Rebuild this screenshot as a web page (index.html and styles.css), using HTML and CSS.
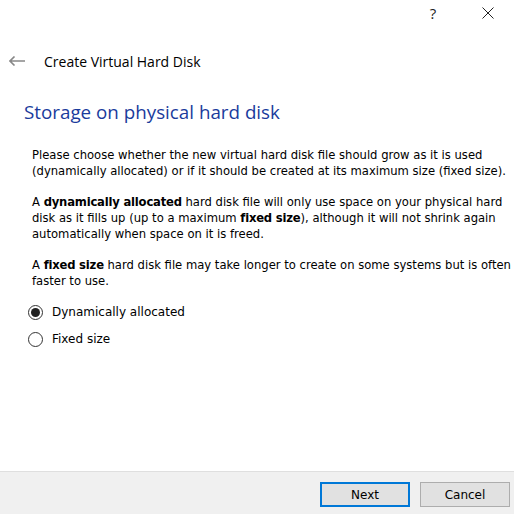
FILE: index.html
```html
<!DOCTYPE html>
<html>
<head>
<meta charset="utf-8">
<link rel="stylesheet" href="styles.css">
</head>
<body>
<div class="dialog">
  <div class="titlebar">
    <span class="tb-help">?</span>
    <span class="tb-close">
      <svg width="12" height="12" viewBox="0 0 12 12"><path d="M0.5 0.5 L11.5 11.5 M11.5 0.5 L0.5 11.5" stroke="#222" stroke-width="1" fill="none"/></svg>
    </span>
  </div>
  <div class="header">
    <svg class="back" width="17" height="10" viewBox="0 0 17 10"><path d="M1 5 H16 M5.5 0.5 L1 5 L5.5 9.5" stroke="#888" stroke-width="1.6" fill="none"/></svg>
    <span class="header-title">Create Virtual Hard Disk</span>
  </div>
  <div class="content">
    <h1 class="heading">Storage on physical hard disk</h1>
    <p class="para">Please choose whether the new virtual hard disk file should grow as it is used<br>(dynamically allocated) or if it should be created at its maximum size (fixed size).</p>
    <p class="para">A <b>dynamically allocated</b> hard disk file will only use space on your physical hard<br>disk as it fills up (up to a maximum <b>fixed size</b>), although it will not shrink again<br>automatically when space on it is freed.</p>
    <p class="para">A <b>fixed size</b> hard disk file may take longer to create on some systems but is often<br>faster to use.</p>
    <div class="radios">
      <label class="radio"><span class="dot checked"></span>Dynamically allocated</label>
      <label class="radio"><span class="dot"></span>Fixed size</label>
    </div>
  </div>
  <div class="footer">
    <button class="btn primary">Next</button>
    <button class="btn">Cancel</button>
  </div>
</div>
</body>
</html>
```
FILE: styles.css
```css
html, body { margin: 0; padding: 0; background: #fff; }
* { box-sizing: border-box; }
.dialog {
  width: 514px; height: 514px;
  display: flex; flex-direction: column;
  font-family: "DejaVu Sans", Verdana, sans-serif;
  color: #000;
}
.titlebar {
  height: 26px;
  display: flex; justify-content: flex-end; align-items: center;
  font-family: "Open Sans", sans-serif;
}
.tb-help { font-size: 15px; color: #222; width: 20px; text-align: center; margin-right: 39px; }
.tb-close { width: 14px; display: flex; align-items: center; margin-right: 18px; }
.header {
  height: 34px; margin-top: 18px;
  display: flex; align-items: center;
}
.back { margin-left: 9px; margin-right: 18px; }
.header-title { font-family: "Open Sans", sans-serif; font-size: 14px; color: #000; }
.content { flex: 1; padding: 0 0 0 32px; }
.heading {
  margin: 21px 0 22px -8px;
  font-family: "Open Sans", sans-serif;
  font-weight: normal; font-size: 18.8px; color: #1a3b9c;
  line-height: 26px;
}
.para { margin: 0 0 15px; font-size: 11.6px; line-height: 16px; white-space: nowrap; }
.para b { letter-spacing: -0.2px; }
.radios { display: flex; flex-direction: column; gap: 11px; margin-left: -4px; }
.radio { display: flex; align-items: center; font-size: 12px; line-height: 16px; }
.dot {
  width: 15px; height: 15px; border: 1px solid #333; border-radius: 50%;
  margin-right: 9px; display: flex; align-items: center; justify-content: center;
  background: #fff;
}
.dot.checked::after { content: ""; width: 9px; height: 9px; border-radius: 50%; background: #222; }
.footer {
  height: 43px; background: #f0f0f0; border-top: 1px solid #dfdfdf;
  display: flex; justify-content: flex-end; align-items: flex-start;
  padding: 10px 4px 0 0; gap: 10px;
}
.btn {
  width: 90px; height: 25px; margin: 0; padding: 0;
  background: #e1e1e1; border: 1px solid #adadad;
  font-family: "DejaVu Sans", Verdana, sans-serif; font-size: 12px; color: #000;
}
.btn.primary { border: 2px solid #0078d7; }
```
